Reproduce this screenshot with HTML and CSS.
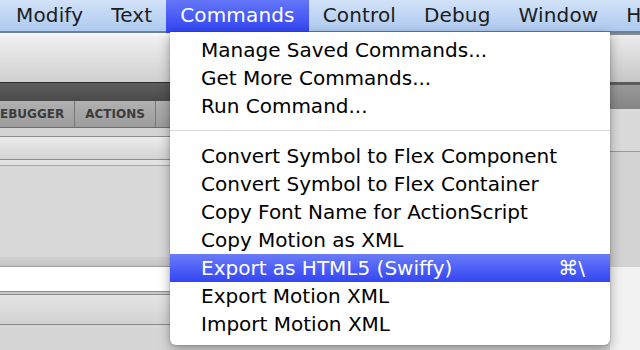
FILE: index.html
```html
<!DOCTYPE html>
<html lang="en">
<head>
    <meta charset="UTF-8">
    <meta name="viewport" content="width=device-width, initial-scale=1.0">
    <title>Commands menu</title>
    <link rel="stylesheet" href="styles.css">
</head>
<body>
    <div class="menubar">
        <span class="menubar-item">Modify</span>
        <span class="menubar-item">Text</span>
        <span class="menubar-item active">Commands</span>
        <span class="menubar-item">Control</span>
        <span class="menubar-item">Debug</span>
        <span class="menubar-item">Window</span>
        <span class="menubar-item">Help</span>
    </div>

    <div class="workspace">
        <div class="panel-left">
            <div class="toolbar"></div>
            <div class="darkbar"></div>
            <div class="tabs">
                <span class="tab">DEBUGGER</span>
                <span class="tab">ACTIONS</span>
            </div>
            <div class="strip"></div>
            <div class="header-row"></div>
            <div class="thin-row"></div>
            <div class="content-area"></div>
            <div class="band"></div>
            <div class="input-row"></div>
            <div class="double-line"></div>
            <div class="footer-row"></div>
            <div class="rest"></div>
        </div>
        <div class="panel-right">
            <div class="r-toolbar"></div>
            <div class="r-darkbar"></div>
            <div class="r-upper"></div>
            <div class="r-middle"></div>
            <div class="r-lower"></div>
        </div>
    </div>

    <div class="dropdown">
        <div class="menu-row">Manage Saved Commands...</div>
        <div class="menu-row">Get More Commands...</div>
        <div class="menu-row">Run Command...</div>
        <div class="separator"></div>
        <div class="menu-row">Convert Symbol to Flex Component</div>
        <div class="menu-row">Convert Symbol to Flex Container</div>
        <div class="menu-row">Copy Font Name for ActionScript</div>
        <div class="menu-row">Copy Motion as XML</div>
        <div class="menu-row selected">
            <span>Export as HTML5 (Swiffy)</span>
            <span class="shortcut">⌘\</span>
        </div>
        <div class="menu-row">Export Motion XML</div>
        <div class="menu-row">Import Motion XML</div>
    </div>
</body>
</html>
```

FILE: styles.css
```css
body {
    margin: 0;
    width: 640px;
    height: 350px;
    overflow: hidden;
    position: relative;
    font-family: 'DejaVu Sans', Verdana, sans-serif;
    background-color: #d8d8d8;
}

/* top menu bar */
.menubar {
    display: flex;
    height: 31px;
    padding-left: 2px;
    background: linear-gradient(#d2e2f8, #aecaf0);
    border-bottom: 2px solid #6d7f99;
    white-space: nowrap;
}

.menubar-item {
    flex-shrink: 0;
    padding: 0 14px;
    font-size: 20px;
    letter-spacing: 0.15px;
    line-height: 31px;
    color: #1c1c1c;
}

.menubar-item.active {
    height: 33px;
    background: linear-gradient(#6476f8, #3043f3);
    color: #ffffff;
}

/* panels behind the menu */
.workspace {
    display: grid;
    grid-template-columns: 1fr 30px;
    height: 317px;
}

.panel-left,
.panel-right {
    display: flex;
    flex-direction: column;
}

.toolbar {
    height: 46px;
    border-top: 3px solid #f7f7f7;
    background: linear-gradient(#f0f0f0, #cfcfcf);
}

.darkbar {
    height: 18px;
    border-top: 1px solid #2e2e2e;
    background: linear-gradient(#5e5e5e, #4a4a4a);
}

.tabs {
    display: flex;
    height: 26px;
    margin-left: -20px;
    background: linear-gradient(#b0b0b0, #9c9c9c);
    border-bottom: 1px solid #6e6e6e;
}

.tab {
    padding: 0 10px;
    font-size: 12px;
    font-weight: bold;
    line-height: 26px;
    color: #3c3c3c;
    border-right: 1px solid #777777;
}

.strip {
    height: 8px;
    background-color: #d4d4d4;
    border-bottom: 1px solid #8c8c8c;
}

.header-row {
    height: 22px;
    background: linear-gradient(#ececec, #d3d3d3);
    border-bottom: 1px solid #8e8e8e;
}

.thin-row {
    height: 5px;
    background-color: #e2e2e2;
    border-bottom: 1px solid #a8a8a8;
}

.content-area {
    height: 91px;
    background-color: #d8d8d8;
}

.band {
    height: 9px;
    background: linear-gradient(#d0d0d0, #c4c4c4);
    border-bottom: 1px solid #9c9c9c;
}

.input-row {
    height: 24px;
    background-color: #ffffff;
}

.double-line {
    height: 2px;
    border-top: 1px solid #8e8e8e;
    border-bottom: 1px solid #8e8e8e;
    background-color: #c8c8c8;
}

.footer-row {
    height: 29px;
    background: linear-gradient(#e4e4e4, #d2d2d2);
    border-bottom: 1px solid #8a8a8a;
}

.rest {
    flex: 1;
    background-color: #d6d6d6;
}

.r-toolbar {
    height: 47px;
    border-top: 2px solid #8a8a8a;
    background: linear-gradient(#ececec, #c6c6c6);
}

.r-darkbar {
    height: 24px;
    border-top: 3px solid #5c5c5c;
    background: linear-gradient(#999999, #858585);
}

.r-upper {
    height: 42px;
    background-color: #dadada;
    border-bottom: 1px solid #9a9a9a;
}

.r-middle {
    height: 115px;
    background-color: #d2d2d2;
}

.r-lower {
    flex: 1;
    background-color: #f2f2f2;
}

/* the open Commands menu */
.dropdown {
    position: absolute;
    top: 32px;
    left: 170px;
    width: 440px;
    padding: 4px 0 7px;
    background-color: #ffffff;
    border-radius: 0 0 6px 6px;
    box-shadow: 0 4px 12px rgba(0, 0, 0, 0.35), 0 0 0 1px rgba(0, 0, 0, 0.08);
}

.menu-row {
    display: flex;
    justify-content: space-between;
    height: 28px;
    padding: 0 25px 0 31px;
    font-size: 20px;
    line-height: 28px;
    color: #000000;
    white-space: nowrap;
}

.menu-row.selected {
    background: linear-gradient(#6a7cf8, #3345f4);
    color: #ffffff;
}

.separator {
    height: 1px;
    margin: 10px 0 11px;
    background-color: #d6d6d6;
}
```
